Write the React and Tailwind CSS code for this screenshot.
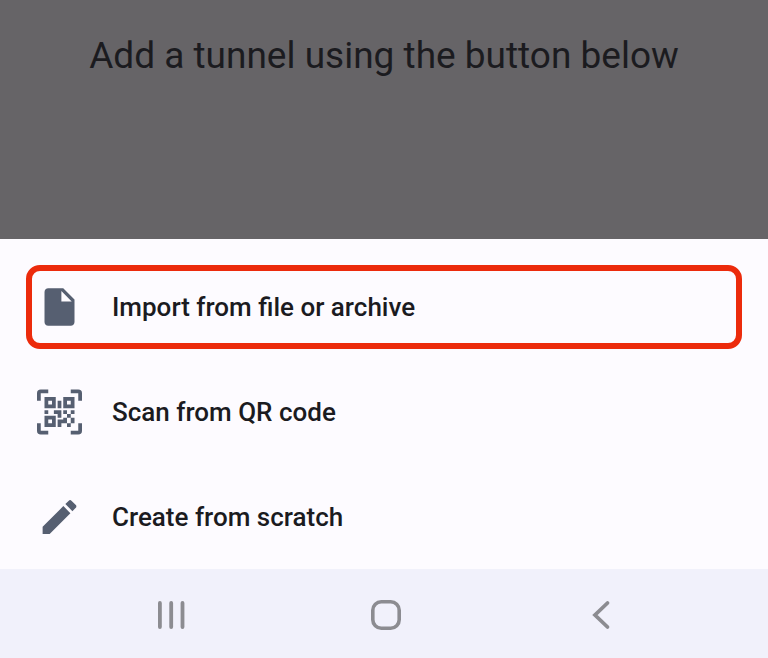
import React from 'react';
import clsx from 'clsx';

const actions = [
    {
        label: 'Import from file or archive',
        highlighted: true,
        icon: 'M6 2c-1.1 0-1.99.9-1.99 2L4 20c0 1.1.89 2 1.99 2H18c1.1 0 2-.9 2-2V8l-6-6H6zm7 7V3.5L18.5 9H13z',
    },
    {
        label: 'Scan from QR code',
        icon: 'M4,4H10V10H4V4M20,4V10H14V4H20M14,15H16V13H14V11H16V13H18V11H20V13H18V15H20V18H18V20H16V18H13V20H11V16H14V15M16,15V18H18V15H16M4,20V14H10V20H4M6,6V8H8V6H6M16,6V8H18V6H16M6,16V18H8V16H6M4,11H6V13H4V11M9,11H13V15H11V13H9V11M11,6H13V10H11V6M2,2V6H0V2A2,2 0 0,1 2,0H6V2H2M22,0A2,2 0 0,1 24,2V6H22V2H18V0H22M2,18V22H6V24H2A2,2 0 0,1 0,22V18H2M22,22V18H24V22A2,2 0 0,1 22,24H18V22H22V22Z',
    },
    {
        label: 'Create from scratch',
        icon: 'M3 17.25V21h3.75L17.81 9.94l-3.75-3.75L3 17.25zM20.71 7.04c.39-.39.39-1.02 0-1.41l-2.34-2.34c-.39-.39-1.02-.39-1.41 0l-1.83 1.83 3.75 3.75 1.83-1.83z',
    },
];

function ActionButton({ label, icon, highlighted }) {
    return (
        <button
            type="button"
            className={clsx(
                'flex w-full items-center gap-[30px] rounded-[14px] border-6 px-[5px] py-3 text-left',
                highlighted ? 'border-[#ec2b0c]' : 'border-transparent'
            )}
        >
            <svg viewBox="0 0 24 24" className="h-12 w-[45px] shrink-0 fill-[#565f71]" aria-hidden="true">
                <path d={icon} fillRule="evenodd" />
            </svg>
            <span className="text-[26px] leading-8 font-medium">{label}</span>
        </button>
    );
}

function NavigationBar() {
    return (
        <nav className="flex items-center bg-[#f1f1fb] pt-[29px] pr-[60px] pb-[26px] pl-16 text-[#8c8c91]">
            <button type="button" aria-label="Recents" className="flex flex-1 justify-center">
                <svg width="34" height="34" viewBox="0 0 34 34" stroke="currentColor" strokeWidth="3.8" strokeLinecap="round">
                    <path d="M5.9 5v24M17.2 5v24M28.5 5v24" />
                </svg>
            </button>
            <button type="button" aria-label="Home" className="flex flex-1 justify-center">
                <svg width="34" height="34" viewBox="0 0 34 34" fill="none" stroke="currentColor" strokeWidth="3.6">
                    <rect x="3.8" y="3.8" width="26.4" height="26.4" rx="8.5" />
                </svg>
            </button>
            <button type="button" aria-label="Back" className="flex flex-1 justify-center">
                <svg width="34" height="34" viewBox="0 0 34 34" fill="none" stroke="currentColor" strokeWidth="3.8" strokeLinecap="round">
                    <path d="M23.5 5L11 17L23.5 29" />
                </svg>
            </button>
        </nav>
    );
}

export default function App() {
    return (
        <div className="flex min-h-screen flex-col bg-[#666467] font-[Roboto,sans-serif] text-[#1b1b1f]">
            <main className="grow px-6 pt-8 text-center">
                <h1 className="text-[37px] leading-12">Add a tunnel using the button below</h1>
            </main>
            <section className="flex flex-col gap-[21px] bg-[#fdfbff] px-[26px] pt-[26px] pb-[10px]">
                {actions.map((action) => (
                    <ActionButton key={action.label} {...action} />
                ))}
            </section>
            <NavigationBar />
        </div>
    );
}
